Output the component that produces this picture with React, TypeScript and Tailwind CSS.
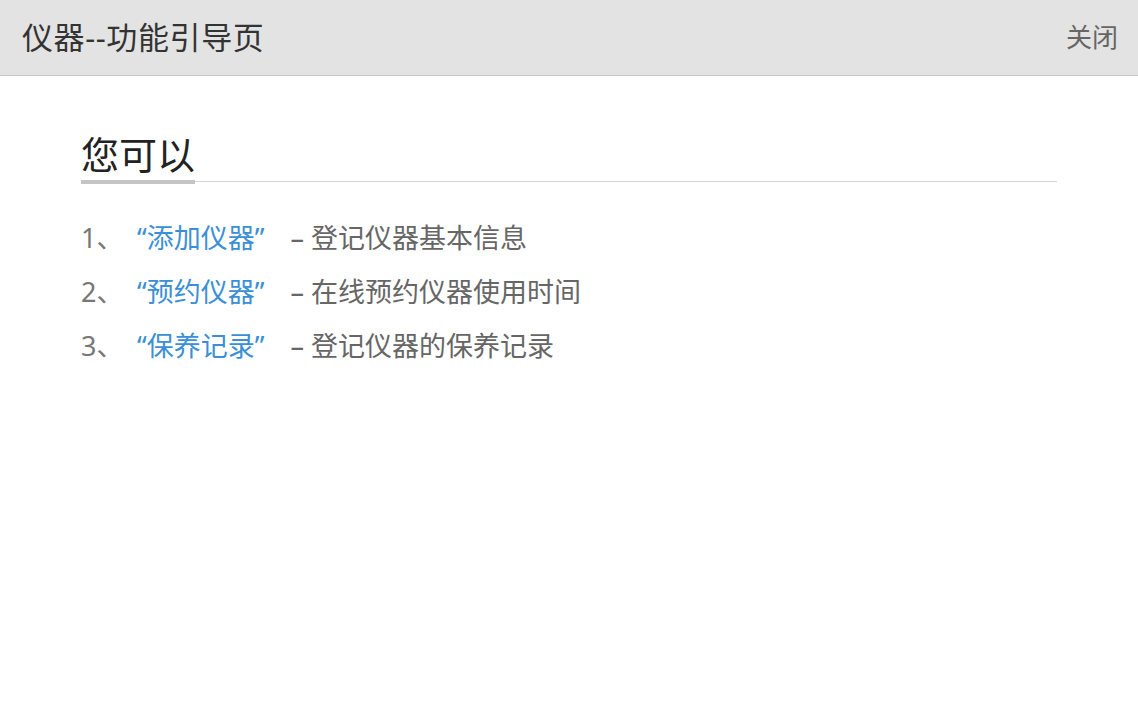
const FONT = "font-['Noto_Sans','Noto_Sans_CJK_SC',sans-serif]";

const ITEMS = [
  { no: '1、', link: '“添加仪器”', desc: '– 登记仪器基本信息' },
  { no: '2、', link: '“预约仪器”', desc: '– 在线预约仪器使用时间' },
  { no: '3、', link: '“保养记录”', desc: '– 登记仪器的保养记录' },
];

export default function App() {
  return (
    <div className={`${FONT} min-h-[709px] w-full bg-white`}>
      <header className="flex h-[76px] items-center justify-between border-b border-[#c8c8c8] bg-[#e3e3e3] pl-[22px] pr-[20px]">
        <h1 className="text-[31px] font-normal tracking-[0.6px] text-[#333]">仪器--功能引导页</h1>
        <button className="text-[26px] text-[#666]">关闭</button>
      </header>
      <main className="px-[81px] pt-[52px]">
        <div className="border-b border-[#d4d4d4]">
          <h2 className="text-[38px] leading-[52px] text-[#222]">您可以</h2>
          <div className="mb-[-3px] h-[4px] w-[114px] bg-[#c4c4c4]" />
        </div>
        <ul className="mt-[38px] flex flex-col gap-[18px]">
          {ITEMS.map((it) => (
            <li key={it.no} className="flex items-center text-[27px] leading-[36px]">
              <span className="w-[56px] text-[#777]">{it.no}</span>
              <span className="text-[#3b8fd6]">{it.link}</span>
              <span className="ml-[26px] text-[#666]">{it.desc}</span>
            </li>
          ))}
        </ul>
      </main>
    </div>
  );
}
